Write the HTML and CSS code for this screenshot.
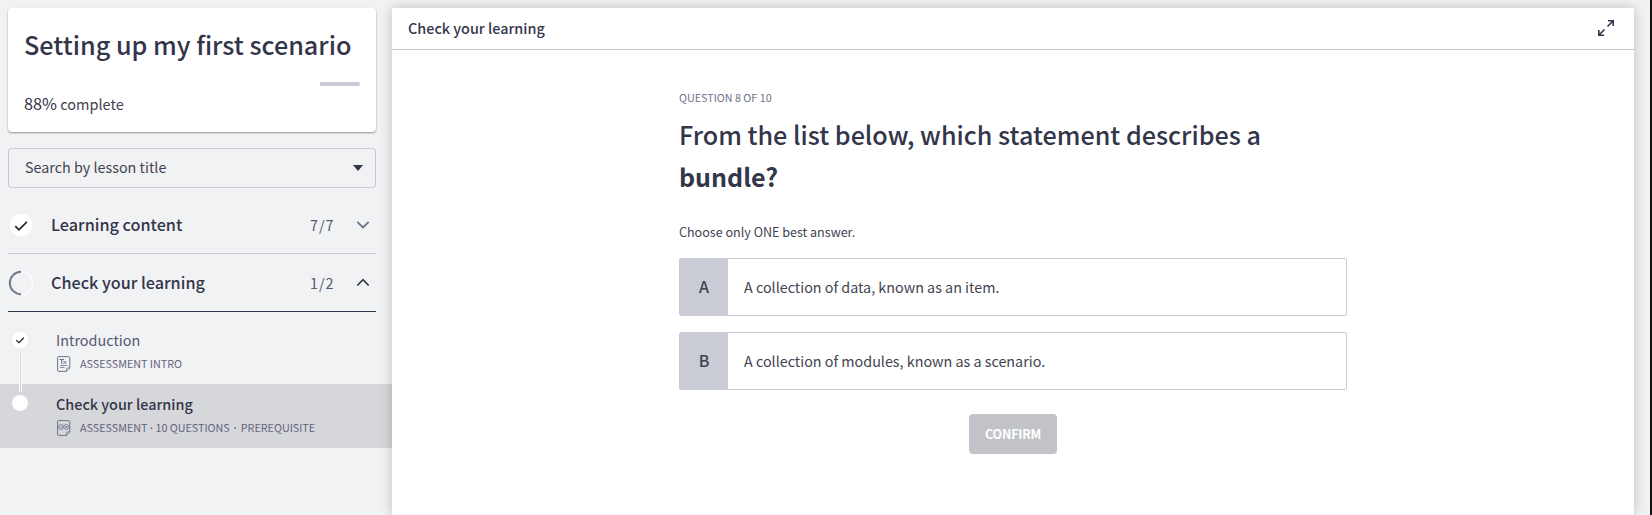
FILE: index.html
```html
<!DOCTYPE html>
<html lang="en">
<head>
<meta charset="utf-8">
<title>Check your learning</title>
<link rel="stylesheet" href="styles.css">
</head>
<body>
<div class="app">
  <aside class="sidebar">
    <section class="course-card">
      <h1 class="course-title">Setting up my first scenario</h1>
      <div class="progress"><div class="progress-rest"></div></div>
      <p class="progress-label"><b>88%</b> complete</p>
    </section>
    <div class="lesson-search"><span>Search by lesson title</span>
      <svg width="10" height="6" viewBox="0 0 10 6"><path d="M0 0h10L5 6z" fill="#33354d"/></svg>
    </div>
    <div class="section">
      <svg class="status" width="26" height="26" viewBox="0 0 26 26"><circle cx="13" cy="13" r="12" fill="#fff" stroke="#e3e4e6" stroke-width=".5"/><path d="M7.3 14.2l3.6 3.6 8-8" fill="none" stroke="#25262e" stroke-width="1.7"/></svg>
      <span class="section-name">Learning content</span>
      <span class="count">7/7</span>
      <svg class="chevron" width="14" height="9" viewBox="0 0 14 9"><path d="M1.3 1.8L7 7.5l5.7-5.7" fill="none" stroke="#70728b" stroke-width="1.8"/></svg>
    </div>
    <div class="section open">
      <svg class="status" width="26" height="26" viewBox="0 0 26 26"><circle cx="13" cy="13" r="11.3" fill="none" stroke="#fff" stroke-width="1.5"/><path d="M13 1.2a11.9 11.9 0 0 1 0 23.6" fill="none" stroke="#dddee1" stroke-width=".5" stroke-dasharray="2 1"/><path d="M13 1.8a11.2 11.2 0 0 0 0 22.4" fill="none" stroke="#70728b" stroke-width="1.9"/></svg>
      <span class="section-name">Check your learning</span>
      <span class="count">1/2</span>
      <svg class="chevron" width="14" height="9" viewBox="0 0 14 9"><path d="M1.3 7.5L7 1.6l5.7 5.9" fill="none" stroke="#33354d" stroke-width="1.7"/></svg>
    </div>
    <div class="lessons">
      <div class="lesson">
        <div class="marker">
          <svg width="16" height="16" viewBox="0 0 16 16"><circle cx="8" cy="8" r="8" fill="#fff"/><path d="M4.3 8.2l2.7 2.5 4.8-5" fill="none" stroke="#25262e" stroke-width="1.3"/></svg>
          <div class="connector"></div>
        </div>
        <div class="lesson-body">
          <div class="lesson-name intro">Introduction</div>
          <div class="meta">
            <svg width="14" height="16" viewBox="0 0 14 16" fill="none" stroke="#70728b"><path d="M1.7.6h10q1.1 0 1.1 1.1v10.300l-3.400 3.400H1.700Q.6 15.400.6 14.300V1.700Q.6.600 1.700.600z"/><path d="M12.800 12h-2.300q-1.100 0-1.100 1.100v2.300M3 9.500h7.500M3 11.500h4.500" stroke-width=".8"/><path d="M2.500 3.500h4.500M4.700 3.500v4.500M6.300 4.900l3 3M9.300 4.900l-3 3"/></svg>
            <span>ASSESSMENT INTRO</span>
          </div>
        </div>
      </div>
      <div class="lesson current">
        <div class="marker"><svg width="16" height="16" viewBox="0 0 16 16"><circle cx="8" cy="8" r="8" fill="#fff"/></svg></div>
        <div class="lesson-body">
          <div class="lesson-name">Check your learning</div>
          <div class="meta">
            <svg width="14" height="16" viewBox="0 0 14 16" fill="none" stroke="#70728b"><path d="M1.7.6h10q1.1 0 1.1 1.1v10.300l-3.400 3.400H1.700Q.6 15.400.6 14.300V1.700Q.6.600 1.700.600z"/><path d="M12.800 12h-2.300q-1.100 0-1.100 1.100v2.300" stroke-width=".8"/><circle cx="4" cy="7" r="2.500" stroke-width=".8"/><circle cx="9.300" cy="7" r="2.500" stroke-width=".8"/><path d="M2.700 7l1.100 1 2-2.200M8.200 5.900l2.200 2.200M10.400 5.900L8.200 8.100" stroke-width=".8"/></svg>
            <span>ASSESSMENT<i class="dot">·</i>10 QUESTIONS<i class="dot wide">·</i>PREREQUISITE</span>
          </div>
        </div>
      </div>
    </div>
  </aside>
  <main class="panel">
    <header class="panel-header"><span>Check your learning</span>
      <svg width="18" height="18" viewBox="0 0 18 18" fill="none" stroke="#33354d" stroke-width="1.6"><path d="M11 1.800h5.200V7M16 2l-5.500 5.500M7 16.200H1.800V11M2 16l5.500-5.500"/></svg>
    </header>
    <div class="question">
      <div class="question-count">QUESTION 8 OF 10</div>
      <h2 class="question-text">From the list below, which statement describes a<br><strong>bundle?</strong></h2>
      <p class="hint">Choose only ONE best answer.</p>
      <div class="option"><span class="letter">A</span><span class="answer">A collection of data, known as an item.</span></div>
      <div class="option"><span class="letter">B</span><span class="answer">A collection of modules, known as a scenario.</span></div>
      <button class="confirm">CONFIRM</button>
    </div>
  </main>
</div>
</body>
</html>
```
FILE: styles.css
```css
* { box-sizing: border-box; }
body { margin: 0; background: #f1f2f4; color: #33354a; font-family: "Source Sans Pro", "Noto Sans CJK SC", "Noto Sans", sans-serif; }
h1, h2, p { margin: 0; }
svg { display: block; flex: none; }
.app { display: flex; height: 515px; overflow: hidden; padding-right: 16px; border-right: 2px solid #111; }
.sidebar { width: 392px; flex: none; padding-top: 8px; }
.course-card { height: 124px; margin: 0 16px 16px 8px; padding: 16px; background: #fff; border-radius: 4px; box-shadow: 0 1px 2px rgba(0,0,0,.4); }
.course-title { font-size: 25.2px; font-weight: 500; line-height: 40px; white-space: nowrap; }
.progress { display: flex; justify-content: flex-end; height: 4px; margin-top: 18px; }
.progress-rest { width: 40px; background: #c9cad6; border-radius: 0 2px 2px 0; }
.progress-label { margin-top: 5px; font-size: 14.5px; line-height: 24px; color: #41434f; }
.progress-label b { font-weight: 400; color: #33354a; font-size: 16.2px; }
.lesson-search { display: flex; align-items: center; justify-content: space-between; height: 40px; margin: 0 16px 8px 8px; padding: 0 12px 0 16px; border: 1px solid #c9cad6; border-radius: 3px; font-size: 14.35px; color: #41434f; }
.lesson-search span { padding-bottom: 4px; }
.section { display: flex; align-items: center; height: 58px; margin: 0 16px 0 8px; border-bottom: 1px solid #c9cad6; }
.section.open { border-bottom-color: #33354a; }
.section-name { flex: 1; margin-left: 17px; padding-bottom: 1px; font-size: 16.2px; font-weight: 500; }
.count { width: 24px; margin-right: 22px; font-size: 14.3px; letter-spacing: 1px; color: #56586f; white-space: nowrap; }
.chevron { margin-right: 6px; }
.lessons { padding-top: 8px; }
.lesson { display: flex; height: 64px; padding-left: 12px; }
.current { background: #d6d7db; }
.marker { width: 16px; padding-top: 12px; flex: none; }
.marker .connector { position: relative; z-index: 1; width: 3px; height: 40px; margin: 4px 0 0 7px; border: 1px solid #fff; border-width: 0 1px; background: #d2d3d7; }
.current .marker { padding-top: 11px; }
.lesson-body { margin-left: 28px; padding-top: 8px; white-space: nowrap; }
.lesson-name { font-size: 14.4px; font-weight: 500; line-height: 24px; }
.lesson-name.intro { font-weight: 400; color: #56586f; }
.meta { display: flex; align-items: center; height: 16px; margin: 4px 0 0 1px; gap: 9px; font-size: 10.75px; line-height: 16px; color: #62647b; }
.dot { display: inline-block; width: 8px; font: 700 10px/10px "Open Sans", sans-serif; text-align: center; }
.dot.wide { width: 11px; }
.panel { flex: 1; margin-top: 8px; background: #fff; box-shadow: 0 0 12px rgba(0,0,0,.22); }
.panel-header { display: flex; align-items: center; justify-content: space-between; height: 42px; padding: 0 19px 0 16px; border-bottom: 1px solid #c5c6cf; font-size: 14.4px; font-weight: 500; }
.panel-header span, .panel-header svg { margin-bottom: 2px; }
.question { width: 668px; margin-left: 287px; padding-top: 40px; }
.question-count { font-size: 10.75px; line-height: 16px; color: #70728b; }
.question-text { margin-top: 7px; font-size: 25.15px; font-weight: 500; line-height: 42px; white-space: nowrap; }
.question-text strong { font-weight: 700; font-size: 25px; }
.hint { margin: 25px 0 16px; font-size: 12.55px; line-height: 20px; color: #41434f; }
.option { display: flex; height: 58px; margin-bottom: 16px; border: 1px solid #c9cad6; border-radius: 2px; overflow: hidden; line-height: 56px; font-size: 14.33px; color: #41434f; }
.letter { width: 48px; background: #c9cbd5; text-align: center; font-weight: 500; font-size: 16px; line-height: 55px; }
.answer { margin-left: 16px; }
.confirm { display: block; width: 88px; height: 40px; margin: 24px auto 0; padding: 0; border: 0; border-radius: 4px; background: #c2c3c9; color: #fff; font: 700 12.5px/38px "Source Sans Pro", "Noto Sans CJK SC", sans-serif; letter-spacing: -.2px; }
```
